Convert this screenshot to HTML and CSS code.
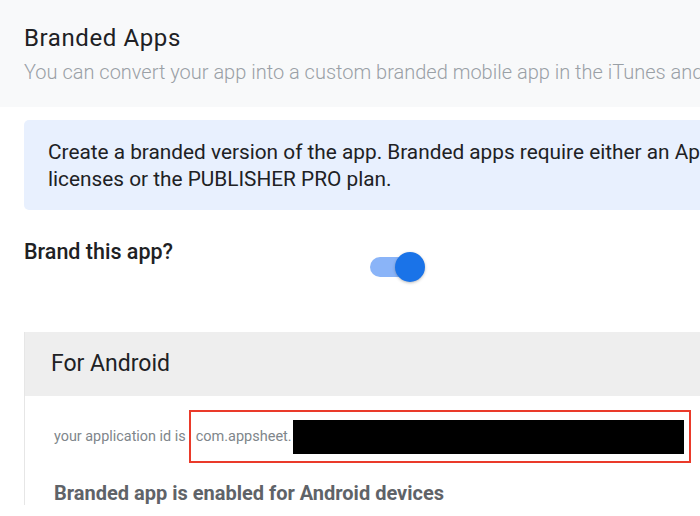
FILE: index.html
```html
<!DOCTYPE html>
<html lang="en">
<head>
	<meta charset="utf-8">
	<title>Branded Apps</title>
	<link rel="stylesheet" href="styles.css">
</head>
<body>
	<div class="header">
		<h1 class="title">Branded Apps</h1>
		<p class="subtitle">You can convert your app into a custom branded mobile app in the iTunes and</p>
	</div>
	<div class="content">
		<div class="notice">
			<p>Create a branded version of the app. Branded apps require either an Ap<br>licenses or the PUBLISHER PRO plan.</p>
		</div>
		<div class="brand-row">
			<span class="brand-label">Brand this app?</span>
			<div class="toggle">
				<span class="track"></span>
				<span class="thumb"></span>
			</div>
		</div>
		<div class="panel">
			<div class="panel-head">For Android</div>
			<div class="panel-body">
				<div class="app-id">
					<span class="id-label">your application id is</span>
					<div class="id-box">
						<span class="id-value">com.appsheet.</span>
						<span class="redacted"></span>
					</div>
				</div>
				<p class="enabled">Branded app is enabled for Android devices</p>
			</div>
		</div>
	</div>
</body>
</html>
```

FILE: styles.css
```css
body {
	margin: 0;
	padding: 0;
	width: 700px;
	overflow: hidden;
	background: #ffffff;
	color: #202124;
	font-family: Roboto, 'Noto Sans', Arial, sans-serif;
}

.header {
	background: #f8f9fa;
	height: 107px;
	padding: 24px 0 0 24px;
	box-sizing: border-box;
	white-space: nowrap;
}

.title {
	margin: 0;
	font-size: 24px;
	font-weight: 400;
	line-height: 28px;
	letter-spacing: 0.6px;
	color: #202124;
}

.subtitle {
	margin: 8px 0 0;
	font-size: 20px;
	font-weight: 300;
	line-height: 24px;
	color: #9aa0a6;
}

.content {
	padding-left: 24px;
}

.notice {
	margin-top: 13px;
	height: 90px;
	box-sizing: border-box;
	padding: 19px 0 0 24px;
	background: #e8f0fe;
	border-radius: 5px 0 0 5px;
	white-space: nowrap;
}

.notice p {
	margin: 0;
	font-size: 20.8px;
	line-height: 27px;
	color: #202124;
}

.brand-row {
	display: flex;
	align-items: flex-start;
	height: 122px;
	padding-top: 29px;
	box-sizing: border-box;
}

.brand-label {
	width: 346px;
	font-size: 21.5px;
	font-weight: 500;
	line-height: 26px;
}

.toggle {
	position: relative;
	width: 56px;
	height: 30px;
	margin-top: 13px;
}

.track {
	position: absolute;
	left: 0;
	top: 5px;
	width: 42px;
	height: 20px;
	border-radius: 10px;
	background: #8ab4f8;
}

.thumb {
	position: absolute;
	left: 25px;
	top: 0;
	width: 30px;
	height: 30px;
	border-radius: 50%;
	background: #1a73e8;
	box-shadow: 0 1px 3px rgba(60, 64, 67, 0.35);
}

.panel {
	border-left: 1px solid #e6e6e6;
}

.panel-head {
	height: 64px;
	padding-left: 26px;
	background: #eeeeee;
	font-size: 23px;
	line-height: 64px;
	color: #202124;
}

.panel-body {
	padding: 14px 0 0 29px;
}

.app-id {
	display: flex;
	align-items: center;
}

.id-label {
	font-size: 14.4px;
	color: #80868b;
	margin-right: 3px;
}

.id-box {
	display: flex;
	align-items: center;
	width: 502px;
	height: 53px;
	box-sizing: border-box;
	padding: 0 5px 0 5px;
	border: 2px solid #ea3a2a;
}

.id-value {
	font-size: 14.5px;
	color: #80868b;
}

.redacted {
	flex: 1;
	height: 34px;
	margin-left: 1px;
	background: #000000;
}

.enabled {
	margin: 18px 0 0;
	font-size: 20px;
	font-weight: 700;
	line-height: 24px;
	color: #5f6368;
}
```
